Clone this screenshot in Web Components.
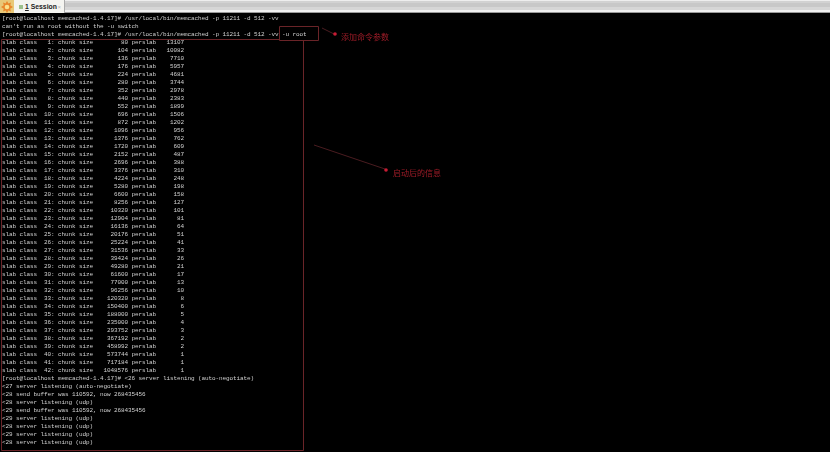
<!DOCTYPE html>
<html>
<head>
<meta charset="utf-8">
<style>
  html, body { margin: 0; height: 100%; background: #000; overflow: hidden; }
  body { display: flex; flex-direction: column; width: 830px; height: 452px; }
</style>
</head>
<body>
<tab-bar>Session</tab-bar>
<term-view></term-view>

<script>
class TabBar extends HTMLElement {
  connectedCallback() {
    this.attachShadow({ mode: 'open' });
    this.shadowRoot.innerHTML = `
      <style>
        :host {
          display: flex;
          flex: none;
          height: 13px;
          background: linear-gradient(#eee 0, #eee 1px, #d2d2d2 1px, #d2d2d2 3px, #c8c8c8 3px, #c8c8c8 7px, #d6d6d6 7px, #d6d6d6 10px, #f0f0f0 10px, #f0f0f0 12px, #9a9a9a 12px);
          font: bold 6.8px "Liberation Sans", sans-serif;
          color: #222;
          white-space: nowrap;
        }
        .logo { width: 14px; flex: none; background: #e8c878; display: flex; align-items: center; justify-content: center; }
        .tab {
          width: 51px;
          flex: none;
          background: #f4f4f0;
          display: flex;
          align-items: center;
          padding-left: 5px;
          box-sizing: border-box;
          border-right: 1px solid #aaa;
        }
        .dot { flex: none; width: 4px; height: 4px; background: #9cc08c; margin-right: 2px; }
        .num { text-decoration: underline; margin-right: 2px; }
        .x { margin-left: auto; margin-right: 3px; color: #b4b4b4; font-weight: normal; font-size: 6px; }
      </style>
      <div class="logo">
        <svg width="12" height="12" viewBox="0 0 12 12">
          <path d="M6 0l1.4 2.6L10 1.5 9.2 4.3 12 6 9.2 7.7 10 10.500 7.400 9.400 6 12 4.600 9.400 2 10.500 2.800 7.700 0 6 2.800 4.300 2 1.500 4.600 2.600z" fill="#e8862a"/>
          <circle cx="6" cy="6" r="2.300" fill="#fbe08a"/>
        </svg>
      </div>
      <div class="tab"><span class="dot"></span><span class="num">1</span><slot></slot><span class="x">×</span></div>
    `;
  }
}

class TermView extends HTMLElement {
  connectedCallback() {
    const sizes = [80,104,136,176,224,280,352,440,552,696,872,1096,1376,1720,2152,2696,3376,4224,5280,6600,8256,10320,12904,16136,20176,25224,31536,39424,49280,61600,77000,96256,120320,150400,188000,235000,293752,367192,458992,573744,717184,1048576];
    const counts = [13107,10082,7710,5957,4681,3744,2978,2383,1899,1506,1202,956,762,609,487,388,310,248,198,158,127,101,81,64,51,41,33,26,21,17,13,10,8,6,5,4,3,2,2,1,1,1];
    const prompt = '[root@localhost memcached-1.4.17]# ';
    const lines = [
      prompt + '/usr/local/bin/memcached -p 11211 -d 512 -vv',
      "can't run as root without the -u switch",
      prompt + '/usr/local/bin/memcached -p 11211 -d 512 -vv -u root'
    ];
    sizes.forEach((s, i) => {
      lines.push('slab class ' + String(i + 1).padStart(3) + ': chunk size ' + String(s).padStart(9) + ' perslab ' + String(counts[i]).padStart(7));
    });
    lines.push(
      prompt + '<26 server listening (auto-negotiate)',
      '<27 server listening (auto-negotiate)',
      '<28 send buffer was 110592, now 268435456',
      '<28 server listening (udp)',
      '<29 send buffer was 110592, now 268435456',
      '<29 server listening (udp)',
      '<28 server listening (udp)',
      '<29 server listening (udp)',
      '<28 server listening (udp)'
    );
    this.attachShadow({ mode: 'open' });
    this.shadowRoot.innerHTML = `
      <style>
        :host {
          display: block;
          flex: 1;
          position: relative;
          background: #000;
          overflow: hidden;
        }
        pre {
          margin: 0;
          padding: 2px 0 0 2px;
          font: 6px/8px "Liberation Mono", monospace;
          letter-spacing: -0.1px;
          color: #d0d0d0;
          filter: blur(0.25px);
        }
        .note { position: absolute; color: #a01c28; font: 8px "Noto Sans CJK SC", sans-serif; filter: blur(0.5px); }
        svg { position: absolute; left: 0; top: 0; }
      </style>
      <pre></pre>
      <svg width="830" height="439" fill="none">
        <path d="M1.500 26.500H279.500M279.500 13.500H318.500V27.500H279.500ZM303.500 27.500V437.500H1.500V26.500" stroke="#6a2428"/>
        <line x1="322" y1="15" x2="334" y2="21" stroke="#4a1c20"/>
        <circle cx="335" cy="21" r="1.800" fill="#c81c34"/>
        <line x1="314" y1="132" x2="385" y2="156" stroke="#4a1c20"/>
        <circle cx="386" cy="157" r="1.800" fill="#c81c34"/>
      </svg>
      <span class="note" style="left:341px;top:18px">添加命令参数</span>
      <span class="note" style="left:393px;top:154px">启动后的信息</span>
    `;
    this.shadowRoot.querySelector('pre').textContent = lines.join('\n');
  }
}

customElements.define('tab-bar', TabBar);
customElements.define('term-view', TermView);
</script>
</body>
</html>
